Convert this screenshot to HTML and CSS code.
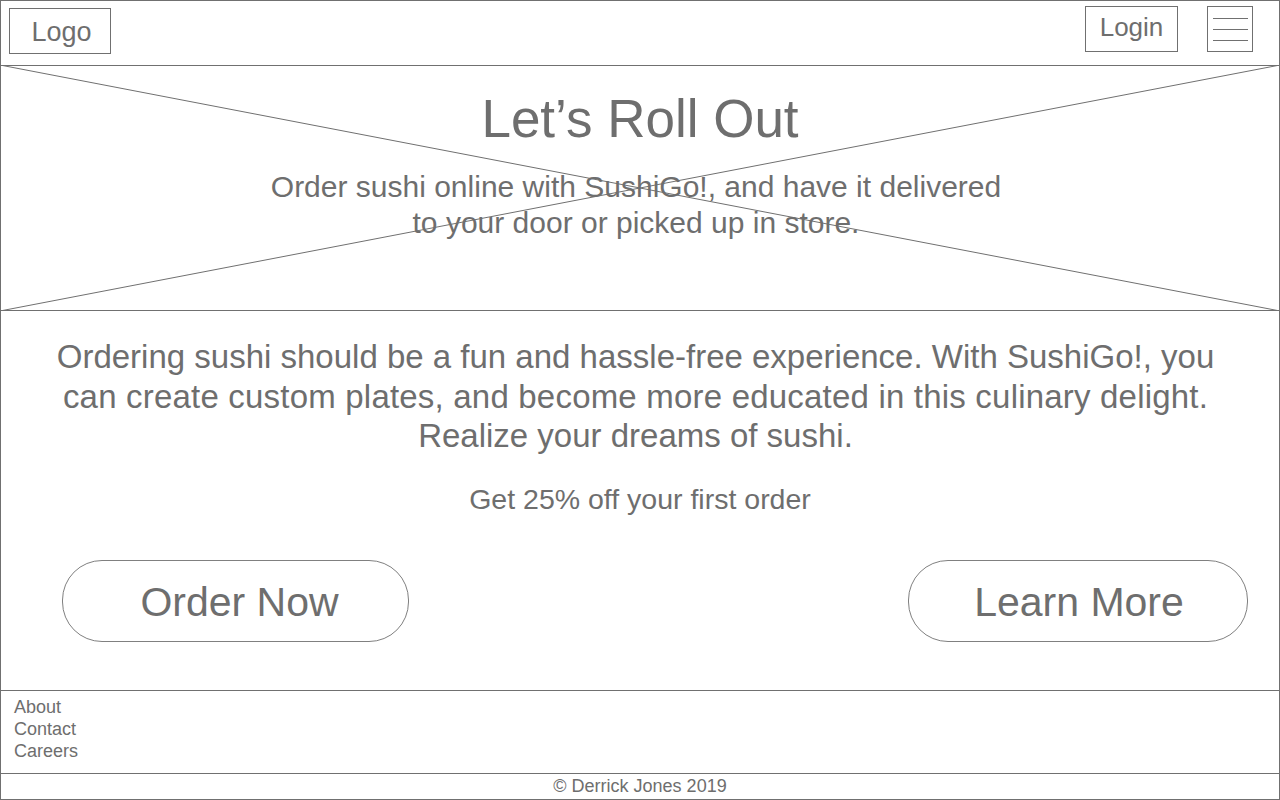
FILE: index.html
```html
<!DOCTYPE html>
<html lang="en">
<head>
<meta charset="utf-8">
<title>SushiGo!</title>
<link rel="stylesheet" href="styles.css">
</head>
<body>
<div class="page">
  <header class="topbar">
    <div class="logo">Logo</div>
    <div class="actions">
      <div class="login">Login</div>
      <div class="burger"><span></span><span></span><span></span></div>
    </div>
  </header>
  <section class="hero">
    <svg class="hero-x" viewBox="0 0 100 100" preserveAspectRatio="none" aria-hidden="true">
      <line x1="0" y1="0" x2="100" y2="100" vector-effect="non-scaling-stroke"/>
      <line x1="0" y1="100" x2="100" y2="0" vector-effect="non-scaling-stroke"/>
    </svg>
    <h1 class="hero-title">Let’s Roll Out</h1>
    <p class="hero-sub">Order sushi online with SushiGo!, and have it delivered<br>to your door or picked up in store.</p>
  </section>
  <main class="content">
    <p class="intro">Ordering sushi should be a fun and hassle-free experience. With SushiGo!, you<br><span class="wide">can create custom plates, and become more educated in this culinary delight.</span><br>Realize your dreams of sushi.</p>
    <p class="offer">Get 25% off your first order</p>
    <div class="cta">
      <a class="btn btn-order">Order Now</a>
      <a class="btn btn-learn">Learn More</a>
    </div>
  </main>
  <nav class="links">
    <a>About</a>
    <a>Contact</a>
    <a>Careers</a>
  </nav>
  <footer class="copy">© Derrick Jones 2019</footer>
</div>
</body>
</html>
```
FILE: styles.css
```css
* { box-sizing: border-box; }
html, body { margin: 0; padding: 0; background: #fff; }
body { font-family: "Liberation Sans", Arial, sans-serif; color: #6e6e6e; }
.page {
  width: 1280px;
  height: 800px;
  border: 1px solid #707070;
  display: flex;
  flex-direction: column;
}
.topbar {
  height: 65px;
  border-bottom: 1px solid #707070;
  display: flex;
  justify-content: space-between;
  align-items: flex-start;
  padding: 0 26px 0 8px;
  flex: none;
}
.logo {
  margin-top: 7px;
  width: 102px;
  height: 46px;
  border: 1px solid #707070;
  display: flex;
  align-items: center;
  justify-content: center;
  font-size: 27px;
  padding: 2px 0 0 3px;
}
.actions { display: flex; gap: 29px; margin-top: 5px; }
.login {
  width: 93px;
  height: 46px;
  border: 1px solid #707070;
  display: flex;
  align-items: center;
  justify-content: center;
  font-size: 26px;
  padding-bottom: 4px;
}
.burger {
  width: 46px;
  height: 46px;
  border: 1px solid #707070;
  display: flex;
  flex-direction: column;
  gap: 10px;
  padding: 11px 4px 0 5px;
}
.burger span { display: block; height: 1px; background: #707070; }
.hero {
  position: relative;
  height: 245px;
  border-bottom: 1px solid #707070;
  flex: none;
  display: flex;
  flex-direction: column;
  align-items: center;
  padding-top: 23px;
}
.hero-x {
  position: absolute;
  left: -1px;
  top: -1px;
  width: calc(100% + 2px);
  height: calc(100% + 2px);
}
.hero-x line { stroke: #707070; stroke-width: 1; }
.hero-title {
  position: relative;
  margin: 0;
  font-weight: normal;
  font-size: 53px;
  line-height: 60px;
}
.hero-sub {
  position: relative;
  margin: 20px 8px 0 0;
  font-size: 30px;
  line-height: 36px;
  text-align: center;
}
.content {
  flex: none;
  height: 380px;
  border-bottom: 1px solid #707070;
  display: flex;
  flex-direction: column;
  align-items: center;
  padding-top: 26px;
}
.intro {
  margin: 0 9px 0 0;
  font-size: 33px;
  line-height: 39.5px;
  text-align: center;
}
.intro .wide { letter-spacing: 0.2px; }
.offer {
  margin: 27px 0 0;
  font-size: 28.5px;
  line-height: 32px;
}
.cta {
  align-self: stretch;
  display: flex;
  justify-content: space-between;
  padding: 0 31px 0 61px;
  margin-top: 45px;
}
.btn {
  height: 82px;
  border: 1px solid #808080;
  border-radius: 40px;
  display: flex;
  align-items: center;
  justify-content: center;
  font-size: 41px;
  color: #6e6e6e;
  padding-top: 3px;
}
.btn-order { width: 347px; padding-left: 8px; }
.btn-learn { width: 340px; padding-left: 2px; }
.links {
  flex: none;
  height: 83px;
  border-bottom: 1px solid #707070;
  display: flex;
  flex-direction: column;
  padding: 5px 0 0 13px;
  font-size: 18px;
  line-height: 22px;
}
.copy {
  flex: 1;
  text-align: center;
  font-size: 18px;
  line-height: 24px;
}
```
